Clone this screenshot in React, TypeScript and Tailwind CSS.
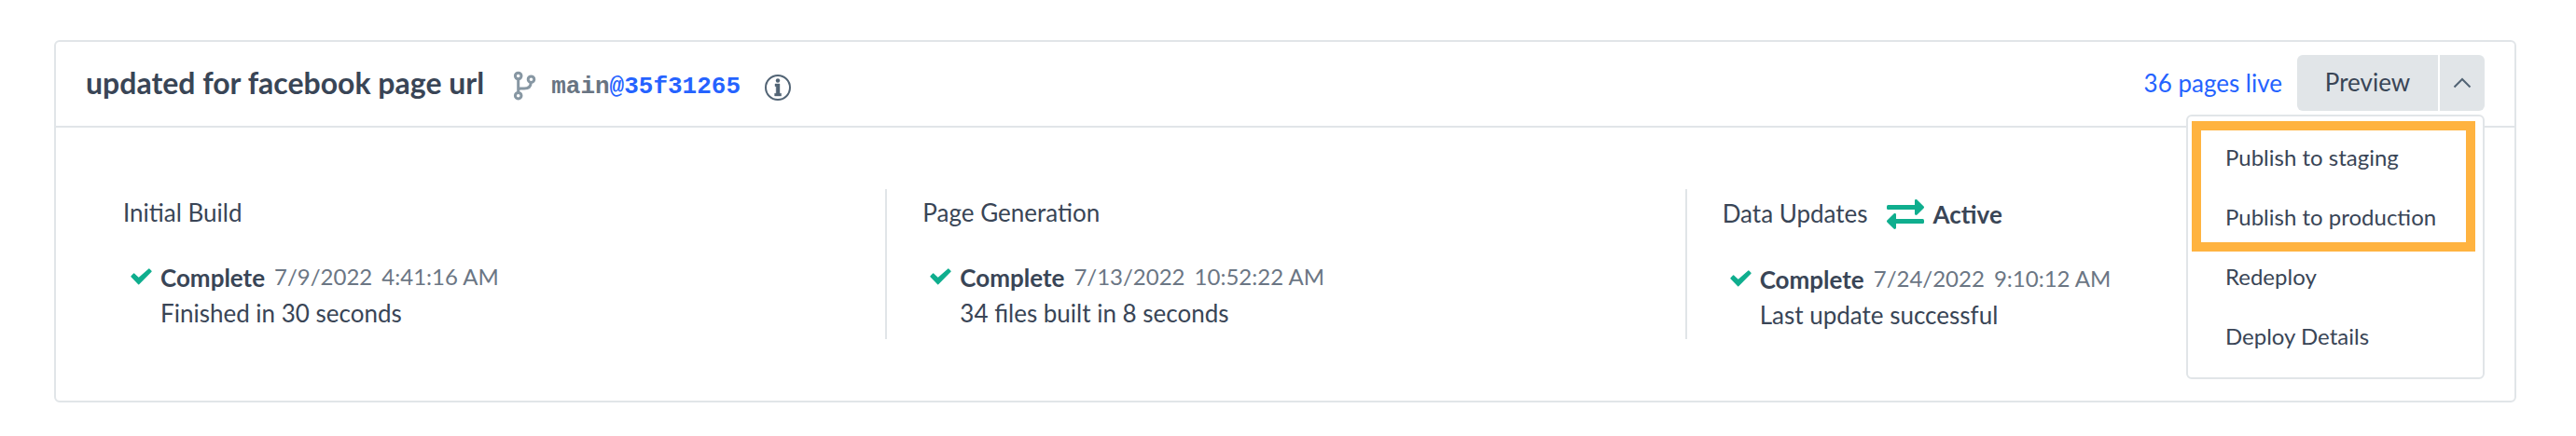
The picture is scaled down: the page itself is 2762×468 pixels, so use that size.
import React from 'react';

interface BuildStage {
  title: string;
  date: string;
  time: string;
  detail: string;
  active?: boolean;
}

const stages: BuildStage[] = [
  { title: 'Initial Build', date: '7/9/2022', time: '4:41:16 AM', detail: 'Finished in 30 seconds' },
  { title: 'Page Generation', date: '7/13/2022', time: '10:52:22 AM', detail: '34 files built in 8 seconds' },
  { title: 'Data Updates', date: '7/24/2022', time: '9:10:12 AM', detail: 'Last update successful', active: true },
];

const BranchIcon: React.FC = () => (
  <svg className="mb-[3px] h-8 w-[25px] shrink-0" viewBox="0 0 25 32" fill="none" stroke="#8797a3" strokeWidth="3">
    <circle cx="5.7" cy="5.5" r="3.3" />
    <circle cx="5.7" cy="26.7" r="3.3" />
    <circle cx="19.5" cy="9.2" r="3.3" />
    <path d="M5.700 9v14.500M5.700 21c0-1.500.8-2 2.300-2h4c4.500 0 7.200-2 7.200-6.500" />
  </svg>
);

const InfoIcon: React.FC = () => (
  <svg className="size-7 shrink-0" viewBox="0 0 28 28" fill="none">
    <circle cx="14" cy="14" r="13" stroke="#526475" strokeWidth="2" />
    <circle cx="14" cy="6.500" r="2.200" fill="#526475" />
    <path
      d="M11 10h5v10.300h1.600v2.700h-7v-2.700h1.600v-7.600H11z"
      fill="#526475"
      stroke="#526475"
      strokeWidth=".4"
      strokeLinejoin="round"
    />
  </svg>
);

const CheckIcon: React.FC = () => (
  <svg className="h-[18px] w-[23px] shrink-0" viewBox="0 0 23 18">
    <path
      d="M1 8.700L3.600 6l5.100 4.800L19.800 1l2.200 2.300L8.700 16.700z"
      fill="#0fae8e"
      stroke="#0fae8e"
      strokeWidth="1.400"
      strokeLinejoin="round"
    />
  </svg>
);

const ArrowsIcon: React.FC = () => (
  <svg className="h-8 w-10 shrink-0" viewBox="0 0 40 32" fill="#0fae8e">
    <rect x="0" y="6" width="34" height="5" rx="1.500" />
    <path d="M30 1.500c0-1.400 1.600-1.800 2.500-.9l7.100 7c.6.600.6 1.200 0 1.800l-7.100 7c-.9.900-2.500.5-2.500-.9z" />
    <rect x="6" y="21" width="34" height="5" rx="1.500" />
    <path d="M10 16.500c0-1.400-1.600-1.800-2.500-.9l-7.100 7c-.6.600-.6 1.200 0 1.800l7.100 7c.9.900 2.500.5 2.500-.9z" />
  </svg>
);

const StageColumn: React.FC<{ stage: BuildStage; first: boolean }> = ({ stage, first }) => (
  <section className={`h-[161px] flex-1 pl-[38px] ${first ? 'border-l-2 border-transparent' : 'border-l-2 border-[#e1e5e8]'}`}>
    <div className={`flex items-center ${stage.active ? 'h-[54px]' : 'h-[52px]'}`}>
      <h2 className="mb-0.5">{stage.title}</h2>
      {stage.active && (
        <div className="ml-5 flex items-center gap-[10px]">
          <ArrowsIcon />
          <strong>Active</strong>
        </div>
      )}
    </div>
    <div className="mt-6 flex pl-2">
      <div className="mt-[9px] w-8">
        <CheckIcon />
      </div>
      <div className="leading-[38px]">
        <div className="flex">
          <strong>Complete</strong>
          <p className="-mt-px ml-[10px] flex gap-[10px] text-[24px] text-[#6b7684]">
            <span>{stage.date}</span>
            <span>{stage.time}</span>
          </p>
        </div>
        <p>{stage.detail}</p>
      </div>
    </div>
  </section>
);

const DeployMenu: React.FC = () => (
  <div className="absolute right-0 top-16 h-[284px] w-80 rounded-md border-2 border-[#e1e5e8] bg-white pt-3 text-[24px]">
    {['Publish to staging', 'Publish to production', 'Redeploy', 'Deploy Details'].map((item) => (
      <button key={item} className="block h-16 w-full pl-10 text-left">
        {item}
      </button>
    ))}
    {/* Callout around the publish actions */}
    <div className="pointer-events-none absolute left-1 top-[5px] h-[140px] w-[304px] border-10 border-[#ffb340]" />
  </div>
);

const App: React.FC = () => {
  return (
    <main className="h-[468px] bg-white pl-[58px] pr-16 pt-[43px] font-['Lato',sans-serif] text-[26px] text-[#394556]">
      <div className="h-[389px] rounded-md border-2 border-[#e1e5e8]">
        <header className="flex h-[92px] items-center border-b-2 border-[#e1e5e8] px-8 pb-0.5">
          <h1 className="text-[32px] font-bold">updated for facebook page url</h1>
          <div className="ml-[31px] mt-2 flex items-center">
            <BranchIcon />
            <span className="ml-4 font-['Liberation_Mono',monospace] font-bold text-[#687482]">
              main<span className="text-[#2563ff]">@35f31265</span>
            </span>
            <span className="ml-[26px] mt-0.5">
              <InfoIcon />
            </span>
          </div>
          <div className="ml-auto flex items-center">
            <a className="mr-4 text-[#2563ff]">36 pages live</a>
            <div className="relative flex gap-0.5">
              <button className="h-[60px] w-[151px] rounded-l-md bg-[#e1e5e8] pb-0.5">Preview</button>
              <button className="flex h-[60px] w-12 items-center justify-center rounded-r-md bg-[#e1e5e8]">
                <svg className="h-3 w-5" viewBox="0 0 20 12" fill="none" stroke="#526475" strokeWidth="2">
                  <path d="M1.500 10.500L10 2l8.500 8.500" />
                </svg>
              </button>
              <DeployMenu />
            </div>
          </div>
        </header>
        <div className="flex px-8 pt-[66px]">
          {stages.map((stage, index) => (
            <StageColumn key={stage.title} stage={stage} first={index === 0} />
          ))}
        </div>
      </div>
    </main>
  );
};

export default App;
